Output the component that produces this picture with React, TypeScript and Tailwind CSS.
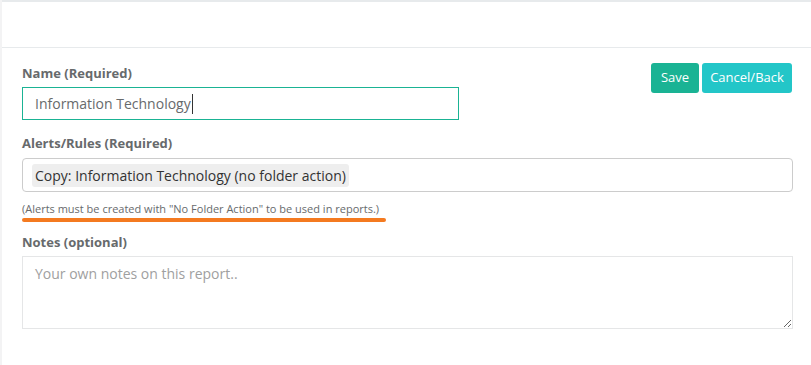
import React from "react";

export default function App() {
  return (
    <div
      className="w-[811px] h-[365px] bg-white overflow-hidden border-l-2 border-[#f3f3f4] text-[#676a6c]"
      style={{ fontFamily: '"Open Sans", "Liberation Sans", sans-serif' }}
    >
      <div className="h-[48px] border-t-2 border-b border-[#e7eaec]" />
      <div className="pl-[20px] pr-[18px] pt-[15px]">
        <div className="flex justify-between items-start">
          <div className="w-[437px]">
            <div className="text-[13px] font-bold leading-[18px] mt-[1px]">Name (Required)</div>
            <div className="mt-[5px] h-[33px] border border-[#1ab394] flex items-center pl-[12px] text-[14px] text-[#676a6c]">
              <span>Information Technology</span>
              <span className="inline-block w-[1px] h-[20px] bg-[#333] ml-[1px]" />
            </div>
          </div>
          <div className="flex gap-[3px] mr-[1px]">
            <button className="h-[30px] w-[48px] rounded-[3px] bg-[#1ab394] text-white text-[13px]">Save</button>
            <button className="h-[30px] w-[90px] rounded-[3px] bg-[#23c6c8] text-white text-[13px]">Cancel/Back</button>
          </div>
        </div>

        <div className="text-[13px] font-bold leading-[18px] mt-[14px]">Alerts/Rules (Required)</div>
        <div className="mt-[6px] h-[34px] border border-[#cccccc] rounded-[4px] flex items-center pl-[9px]">
          <span className="bg-[#eeeeee] rounded-[3px] px-[3px] h-[23px] flex items-center text-[14px] text-[#333]">
            Copy: Information Technology (no folder action)
          </span>
        </div>
        <div className="mt-[9px] text-[11px] leading-[15px] text-[#676a6c]">
          (Alerts must be created with "No Folder Action" to be used in reports.)
        </div>
        <div className="mt-[2px] w-[364px] h-[4px] rounded-full bg-[#f47a20]" />

        <div className="text-[13px] font-bold leading-[18px] mt-[11px]">Notes (optional)</div>
        <textarea
          className="mt-[5px] block w-full h-[73px] border border-[#e5e6e7] px-[12px] pt-[6px] text-[14px] placeholder:text-[#a0a0a0] outline-none"
          placeholder="Your own notes on this report.."
          style={{ fontFamily: '"Open Sans", "Liberation Sans", sans-serif' }}
        />
      </div>
    </div>
  );
}
